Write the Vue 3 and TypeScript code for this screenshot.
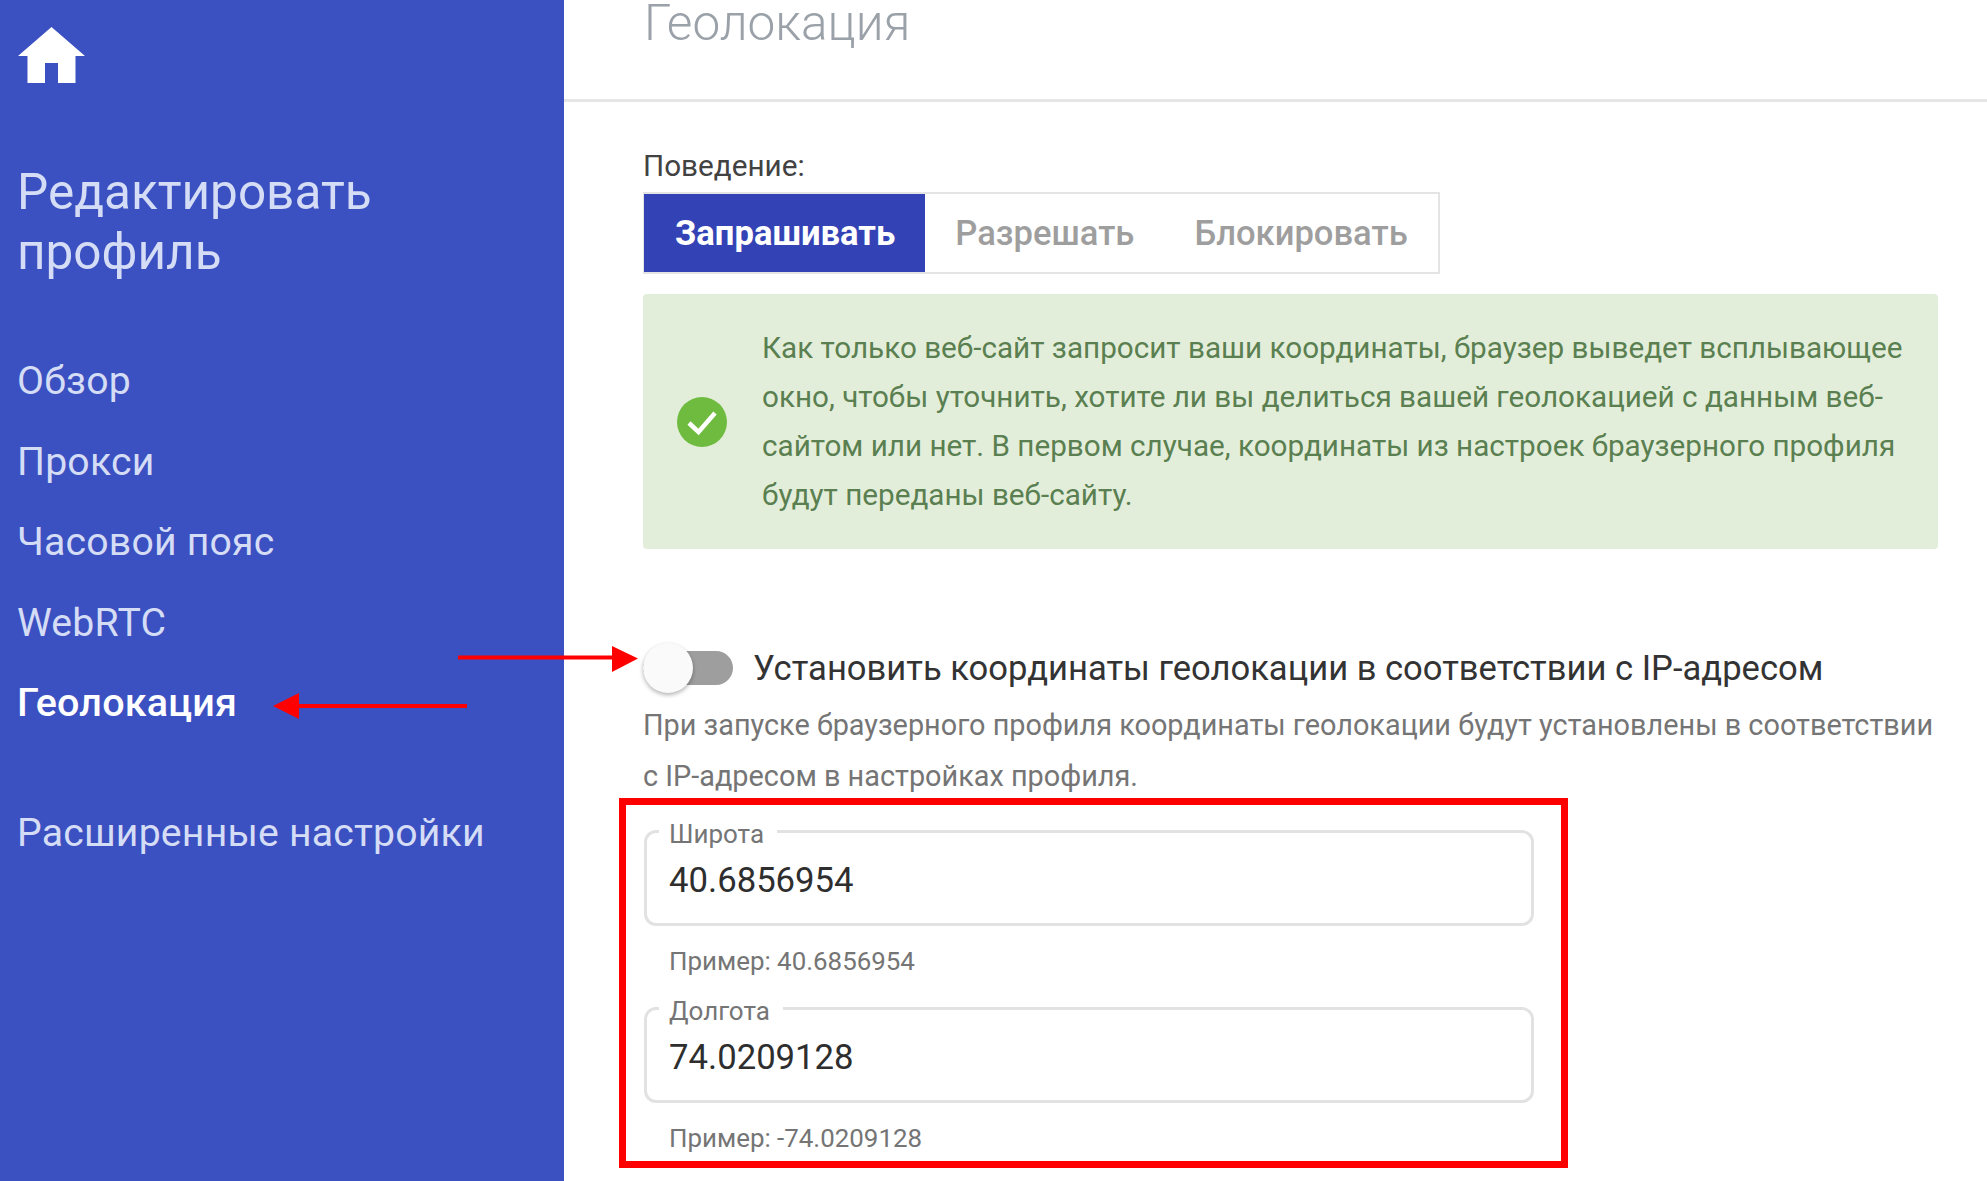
<script setup lang="ts">
const navItems: { label: string; active?: boolean }[] = [
  { label: 'Обзор' },
  { label: 'Прокси' },
  { label: 'Часовой пояс' },
  { label: 'WebRTC' },
  { label: 'Геолокация', active: true },
]
const tabs = ['Запрашивать', 'Разрешать', 'Блокировать']
const fields = [
  { label: 'Широта', value: '40.6856954', hint: 'Пример: 40.6856954' },
  { label: 'Долгота', value: '74.0209128', hint: 'Пример: -74.0209128' },
]
</script>

<template>
  <div class="page">
    <aside class="sidebar">
      <svg class="home" viewBox="0 0 67 56" aria-hidden="true">
        <path d="M33.5 0 67 29H57.500V56H40V36H27V56H9.500V29H0Z" fill="#fff" />
      </svg>
      <h2 class="side-title">Редактировать профиль</h2>
      <nav class="nav">
        <a v-for="item in navItems" :key="item.label" class="nav-item" :class="{ active: item.active }">{{ item.label }}</a>
      </nav>
      <a class="nav-item advanced">Расширенные настройки</a>
    </aside>

    <main class="main">
      <header class="head"><h1 class="title">Геолокация</h1></header>
      <section class="content">
        <div class="behaviour">Поведение:</div>
        <div class="tabs">
          <button v-for="(tab, i) in tabs" :key="tab" class="tab" :class="{ on: i === 0 }">{{ tab }}</button>
        </div>
        <div class="alert">
          <svg class="check" viewBox="0 0 50 50" aria-hidden="true">
            <circle cx="25" cy="25" r="25" fill="#6fbb3f" />
            <path d="M12 26 21.500 35 38 16" fill="none" stroke="#fff" stroke-width="4.500" />
          </svg>
          <p class="alert-text">Как только веб-сайт запросит ваши координаты, браузер выведет всплывающее окно, чтобы уточнить, хотите ли вы делиться вашей геолокацией с данным веб-сайтом или нет. В первом случае, координаты из настроек браузерного профиля будут переданы веб-сайту.</p>
        </div>
        <div class="switch-row">
          <span class="switch"><span class="knob"></span></span>
          <span class="switch-label">Установить координаты геолокации в соответствии с IP-адресом</span>
        </div>
        <p class="desc">При запуске браузерного профиля координаты геолокации будут установлены в соответствии с IP-адресом в настройках профиля.</p>
        <div class="fields">
          <div v-for="f in fields" :key="f.label" class="field">
            <div class="box">
              <span class="box-label">{{ f.label }}</span>
              <span class="box-value">{{ f.value }}</span>
            </div>
            <div class="hint">{{ f.hint }}</div>
          </div>
          <div class="frame"></div>
        </div>
      </section>
    </main>

    <svg class="arrows" viewBox="0 0 1987 1181" aria-hidden="true">
      <path d="M458 655.500H612V646L638 658.500 612 672V659.500H458Z" fill="#f00" />
      <path d="M467 704H299V693L273 706 299 719V708H467Z" fill="#f00" />
    </svg>
  </div>
</template>

<style>
html, body { margin: 0; background: #fff; }
</style>

<style scoped>
.page {
  position: relative;
  display: flex;
  width: 1987px;
  height: 1181px;
  overflow: hidden;
  font-family: Roboto, "Noto Sans", sans-serif;
  background: #fff;
}
.sidebar {
  flex: 0 0 564px;
  box-sizing: border-box;
  padding: 27px 18px 0;
  background: #3b51c1;
  display: flex;
  flex-direction: column;
  align-items: flex-start;
}
.home { width: 67px; height: 56px; display: block; }
.side-title {
  margin: 79px 0 0 -1px;
  width: 420px;
  font-size: 49.500px;
  font-weight: 400;
  line-height: 60px;
  color: #d5dcf5;
}
.nav { margin-top: 59px; display: flex; flex-direction: column; margin-left: -1px; }
.nav-item {
  display: block;
  font-size: 39.200px;
  line-height: 80.500px;
  color: #d5dcf5;
  letter-spacing: 0.200px;
}
.nav-item.active { color: #fff; font-weight: 500; font-size: 39.500px; }
.advanced { margin-top: 49px; margin-left: -1px; }
.main { flex: 1; min-width: 0; display: flex; flex-direction: column; }
.head { height: 102px; border-bottom: 3px solid #e6e6e6; box-sizing: border-box; flex: none; padding-left: 80px; }
.title { margin: -7px 0 0; font-size: 49.500px; line-height: 60px; font-weight: 300; color: #9aa1a8; }
.content { padding: 47px 49px 0 79px; }
.behaviour { font-size: 29.700px; line-height: 34px; color: #424242; }
.tabs {
  margin-top: 9px;
  display: inline-flex;
  box-sizing: border-box;
  width: 797px;
  height: 82px;
  border: 2px solid #e4e4e4;
  vertical-align: top;
}
.tab {
  border: 0;
  background: #fff;
  padding: 0 30px;
  font: 500 34.600px Roboto, sans-serif;
  color: #9e9e9e;
}
.tab.on { background: #3343b5; color: #fff; font-weight: 700; margin-left: -1px; padding: 0 30px 0 31px; }
.alert {
  margin-top: 20px;
  height: 255px;
  box-sizing: border-box;
  border-radius: 4px;
  background: #e3eeda;
  display: flex;
  align-items: center;
  padding: 0 30px 0 34px;
  gap: 35px;
}
.check { width: 50px; height: 50px; flex: none; }
.alert-text { margin: 0; font-size: 29.670px; line-height: 49px; color: #5a7f50; transform: translateY(-1px); }
.switch-row { margin-top: 94px; display: flex; align-items: center; height: 50px; }
.switch { position: relative; display: block; flex: none; width: 90px; height: 34px; border-radius: 17px; background: #9e9e9e; }
.knob { position: absolute; left: 0; top: -8px; width: 50px; height: 50px; border-radius: 50%; background: #fafafa; box-shadow: 0 2px 4px rgba(0,0,0,.3); }
.switch-label { margin-left: 20px; font-size: 34.600px; line-height: 50px; color: #333; }
.desc { margin: 7px 0 0; font-size: 28.850px; line-height: 51px; color: #757575; }
.fields { position: relative; margin-top: 28px; margin-left: 1px; width: 890px; }
.box {
  position: relative;
  box-sizing: border-box;
  height: 96px;
  border: 3px solid #e2e2e2;
  border-radius: 12px;
}
.box-label {
  position: absolute;
  left: 12px;
  top: -15px;
  padding: 0 13px 0 10px;
  background: #fff;
  font-size: 26px;
  line-height: 32px;
  color: #757575;
}
.box-value { position: absolute; left: 22px; top: 25px; font-size: 34.700px; line-height: 44px; color: #2e2e2e; }
.hint { height: 81px; padding: 17px 0 0 25px; box-sizing: border-box; font-size: 25.900px; line-height: 36px; color: #757575; }
.frame { position: absolute; left: -25px; top: -32px; width: 949px; height: 370px; box-sizing: border-box; border: 7px solid #f00; }
.arrows { position: absolute; inset: 0; width: 1987px; height: 1181px; pointer-events: none; }
</style>
